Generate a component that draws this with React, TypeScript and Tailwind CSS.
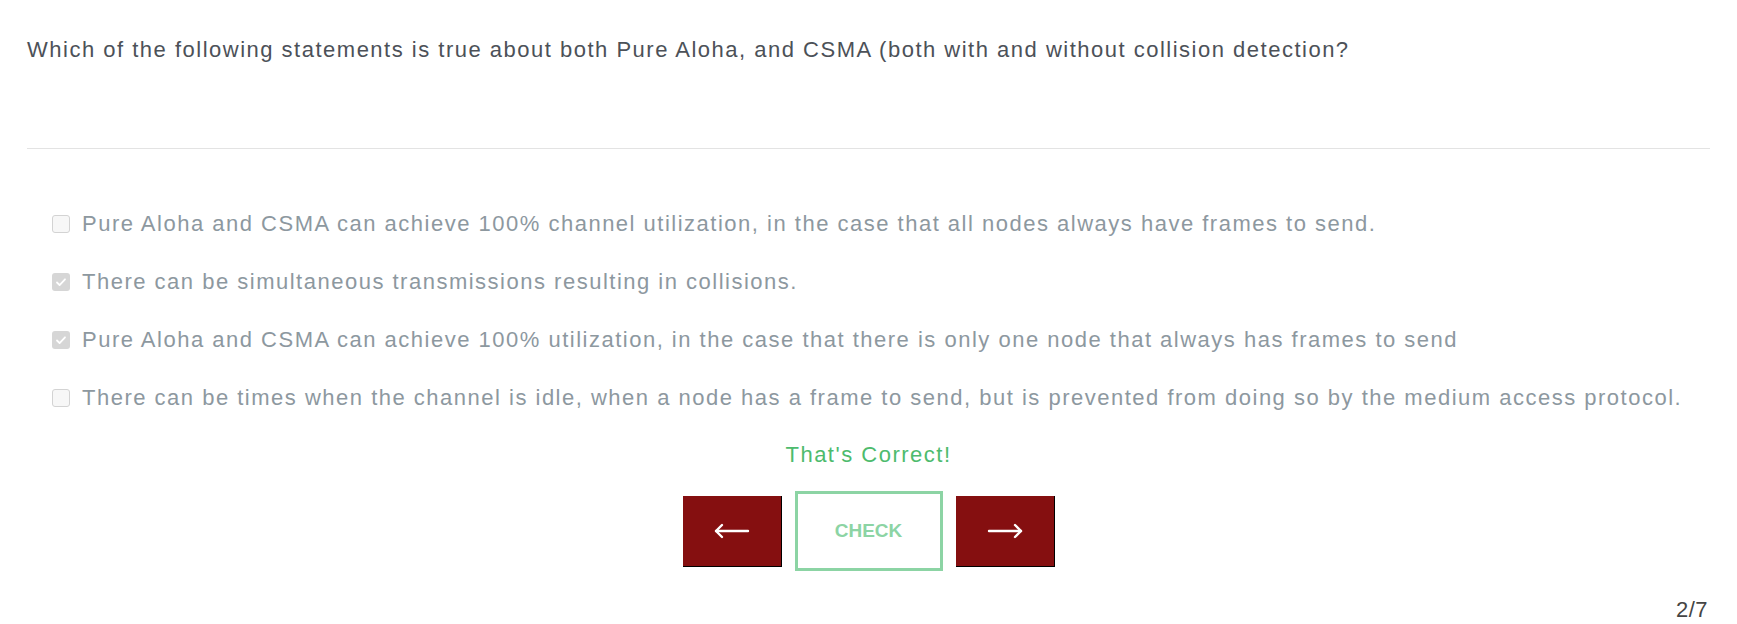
import { useState } from 'react';

type Option = { id: number; text: string; checked: boolean };

const options: Option[] = [
  {
    id: 1,
    text: 'Pure Aloha and CSMA can achieve 100% channel utilization, in the case that all nodes always have frames to send.',
    checked: false,
  },
  {
    id: 2,
    text: 'There can be simultaneous transmissions resulting in collisions.',
    checked: true,
  },
  {
    id: 3,
    text: 'Pure Aloha and CSMA can achieve 100% utilization, in the case that there is only one node that always has frames to send',
    checked: true,
  },
  {
    id: 4,
    text: 'There can be times when the channel is idle, when a node has a frame to send, but is prevented from doing so by the medium access protocol.',
    checked: false,
  },
];

function Arrow({ dir }: { dir: 'left' | 'right' }) {
  return (
    <svg
      width="36"
      height="16"
      viewBox="0 0 36 16"
      fill="none"
      stroke="white"
      strokeWidth="2.4"
      strokeLinecap="round"
      strokeLinejoin="round"
      className={dir === 'right' ? 'rotate-180' : ''}
    >
      <path d="M2 8h32" />
      <path d="M8 2L2 8l6 6" />
    </svg>
  );
}

function Checkbox({ checked }: { checked: boolean }) {
  if (checked) {
    return (
      <span className="flex h-[18px] w-[18px] shrink-0 items-center justify-center rounded-[3px] bg-[#d6d6d6]">
        <svg width="12" height="12" viewBox="0 0 12 12" fill="none">
          <path
            d="M2 6.5l2.6 2.6L10 3.3"
            stroke="white"
            strokeWidth="1.8"
            strokeLinecap="round"
            strokeLinejoin="round"
          />
        </svg>
      </span>
    );
  }
  return (
    <span className="h-[18px] w-[18px] shrink-0 rounded-[3px] border border-[#d3d3d3] bg-[#f7f7f7]" />
  );
}

export default function App() {
  const [page] = useState({ current: 2, total: 7 });

  return (
    <div className="min-h-[624px] bg-white px-[27px] font-['Liberation_Sans',Arial,sans-serif] tracking-[1.5px]">
      {/* Question */}
      <div className="h-[149px] border-b border-[#e3e3e3] pt-[35px]">
        <p className="text-[22px] leading-[30px] text-[#4c5158]">
          Which of the following statements is true about both Pure Aloha, and CSMA (both with and without collision detection?
        </p>
      </div>

      {/* Options */}
      <div className="flex flex-col gap-[28px] pl-[25px] pt-[60px]">
        {options.map((o) => (
          <label key={o.id} className="flex h-[30px] items-center gap-[12px]">
            <Checkbox checked={o.checked} />
            <span className="text-[22px] leading-[30px] text-[#8d989f]">{o.text}</span>
          </label>
        ))}
      </div>

      {/* Feedback */}
      <p className="mt-[27px] text-center text-[22px] leading-[30px] text-[#4dbb6d]">
        That's Correct!
      </p>

      {/* Controls */}
      <div className="mt-[21px] flex items-center justify-center gap-[13px]">
        <button className="flex h-[71px] w-[99px] items-center justify-center border-b border-r border-b-black border-r-black bg-[#850f10]">
          <Arrow dir="left" />
        </button>
        <button className="flex h-[80px] w-[148px] items-center justify-center border-[3px] border-[#8cd4a4] bg-white text-[19px] font-bold tracking-normal text-[#8cd4a4]">
          CHECK
        </button>
        <button className="flex h-[71px] w-[99px] items-center justify-center border-b border-r border-b-black border-r-black bg-[#850f10]">
          <Arrow dir="right" />
        </button>
      </div>

      {/* Page counter */}
      <p className="mt-[24px] pr-[2px] text-right text-[22px] leading-[30px] tracking-[0.5px] text-[#454545]">
        {page.current}/{page.total}
      </p>
    </div>
  );
}
